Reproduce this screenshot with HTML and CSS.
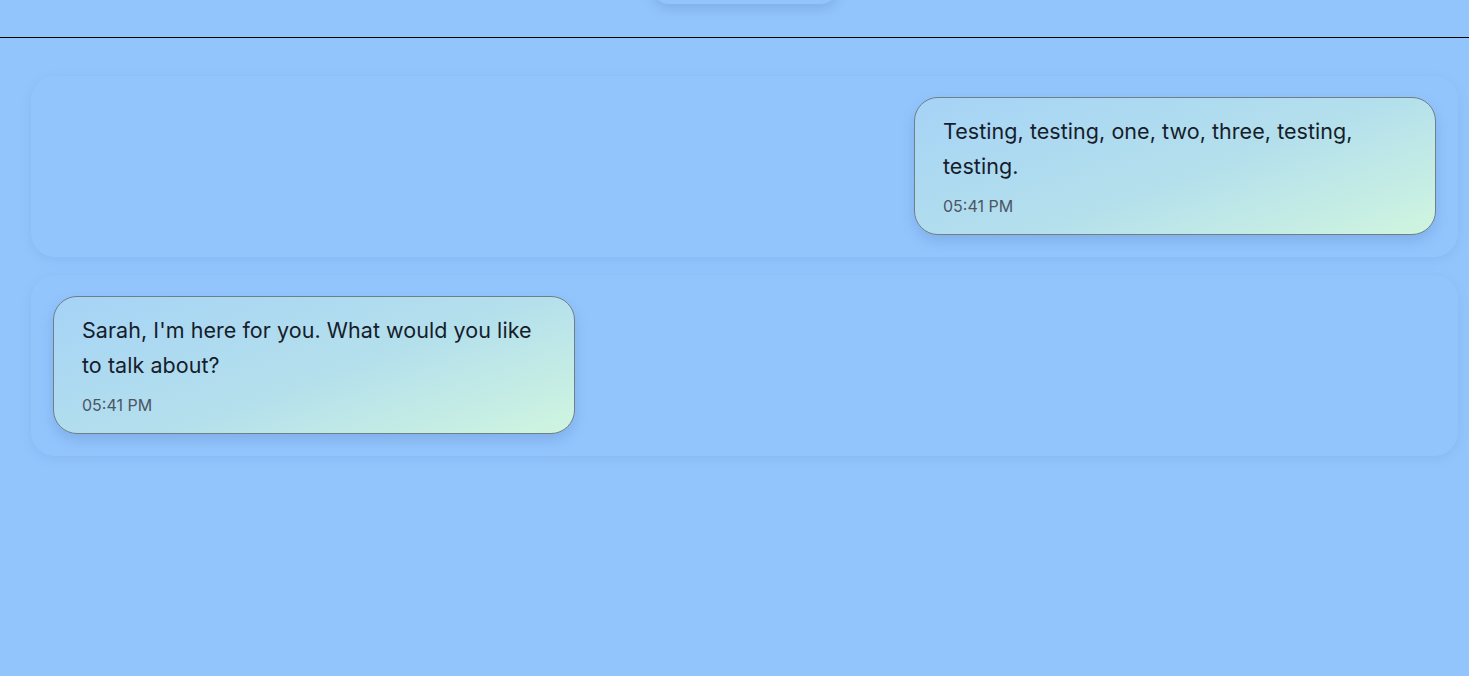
FILE: index.html
```html
<!DOCTYPE html>
<html>
<head>
<meta charset="utf-8">
<link rel="stylesheet" href="styles.css">
</head>
<body>
<header class="top">
  <div class="top-pill"></div>
</header>
<main class="chat">
  <section class="row row-right">
    <div class="bubble">
      <p class="msg">Testing, testing, one, two, three, testing, testing.</p>
      <div class="time">05:41 PM</div>
    </div>
  </section>
  <section class="row row-left">
    <div class="bubble">
      <p class="msg">Sarah, I'm here for you. What would you like to talk about?</p>
      <div class="time">05:41 PM</div>
    </div>
  </section>
</main>
</body>
</html>
```
FILE: styles.css
```css
* { box-sizing: border-box; }
html, body { margin: 0; padding: 0; }
body {
  background: #93c5fd;
  font-family: Inter, "Noto Sans", sans-serif;
  height: 676px;
  overflow: hidden;
}
.top {
  height: 38px;
  border-bottom: 1px solid #000;
  display: flex;
  justify-content: center;
}
.top-pill {
  width: 184px;
  height: 40px;
  margin-top: -36px;
  margin-left: 21px;
  border-radius: 16px;
  background: #93c5fd;
  box-shadow: 0 4px 14px rgba(30, 64, 120, 0.18);
}
.chat {
  padding: 38px 11px 0 31px;
  display: flex;
  flex-direction: column;
  gap: 18px;
}
.row {
  display: flex;
  padding: 21px 22px 22px 22px;
  border-radius: 24px;
  background: #93c5fd;
  box-shadow: 0 3px 12px rgba(40, 80, 140, 0.10);
}
.row-right { justify-content: flex-end; }
.row-left { justify-content: flex-start; }
.bubble {
  width: 522px;
  padding: 16px 28px 16px 28px;
  border: 1px solid #6f7f86;
  border-radius: 24px;
  background: linear-gradient(160deg, #a6d3f6 0%, #b4e0ec 55%, #d0f5df 100%);
  box-shadow: 0 6px 14px rgba(40, 80, 140, 0.18);
}
.msg {
  margin: 0;
  font-size: 21.5px;
  line-height: 35px;
  letter-spacing: 0.05px;
  color: #161d2b;
}
.time {
  margin-top: 10px;
  font-size: 16px;
  line-height: 24px;
  color: #4b5563;
}
```
